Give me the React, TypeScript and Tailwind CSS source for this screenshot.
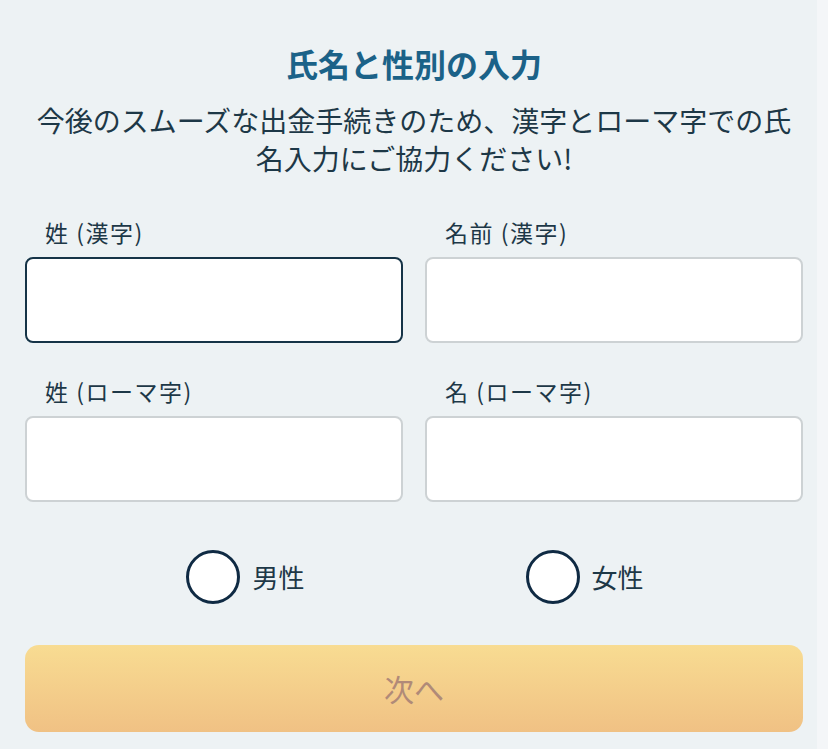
import React, { useState } from "react";

const font = {
  fontFamily: '"Noto Sans CJK JP", "Noto Sans", sans-serif',
};

interface FieldProps {
  label: string;
  active?: boolean;
}

const Field: React.FC<FieldProps> = ({ label, active }) => {
  return (
    <div className="flex flex-col">
      <label className="pl-[20px] text-[23px] leading-[30px] tracking-[1.5px] text-[#1d3847]">
        {label}
      </label>
      <input
        type="text"
        className={
          active
            ? "mt-[10px] h-[86px] w-full rounded-[8px] border-2 border-[#163447] bg-white outline-none"
            : "mt-[10px] h-[86px] w-full rounded-[8px] border-2 border-[#cdd2d4] bg-white outline-none"
        }
      />
    </div>
  );
};

const Radio: React.FC<{ label: string; checked: boolean; onClick: () => void }> = ({
  label,
  checked,
  onClick,
}) => {
  return (
    <div onClick={onClick} className="flex items-center gap-[12px] cursor-pointer">
      <div className="flex h-[54px] w-[54px] items-center justify-center rounded-full border-[3px] border-[#0f2a43] bg-white">
        {checked && <div className="h-[28px] w-[28px] rounded-full bg-[#0f2a43]" />}
      </div>
      <span className="text-[26px] leading-[34px] text-[#1d3847]">{label}</span>
    </div>
  );
};

const App: React.FC = () => {
  const [gender, setGender] = useState<string>("");

  return (
    <div className="flex min-h-[749px] w-full bg-[#edf2f4]" style={font}>
      <div className="w-[817px] pl-[25px] pr-[14px]">
        {/* titulo */}
        <h1 className="mt-[45px] text-center text-[32px] font-bold leading-[36px] text-[#1b6288]">
          氏名と性別の入力
        </h1>
        <p className="mt-[20px] text-center text-[28px] leading-[38px] text-[#1d3847]">
          今後のスムーズな出金手続きのため、漢字とローマ字での氏
          <br />
          名入力にご協力ください!
        </p>

        <div className="mt-[40px] grid grid-cols-2 gap-x-[22px] gap-y-[33px]">
          <Field label="姓 (漢字)" active />
          <Field label="名前 (漢字)" />
          <Field label="姓 (ローマ字)" />
          <Field label="名 (ローマ字)" />
        </div>

        <div className="mt-[48px] flex justify-center gap-[221px] pl-[2px]">
          <Radio label="男性" checked={gender === "m"} onClick={() => setGender("m")} />
          <Radio label="女性" checked={gender === "f"} onClick={() => setGender("f")} />
        </div>

        <button className="mt-[41px] flex h-[87px] w-full items-center justify-center rounded-[14px] bg-gradient-to-b from-[#f8dc92] to-[#f0c184] text-[30px] text-[#b08a78]">
          次へ
        </button>
      </div>
      <div className="w-[11px] bg-[#f4f6f8]" />
    </div>
  );
};

export default App;
